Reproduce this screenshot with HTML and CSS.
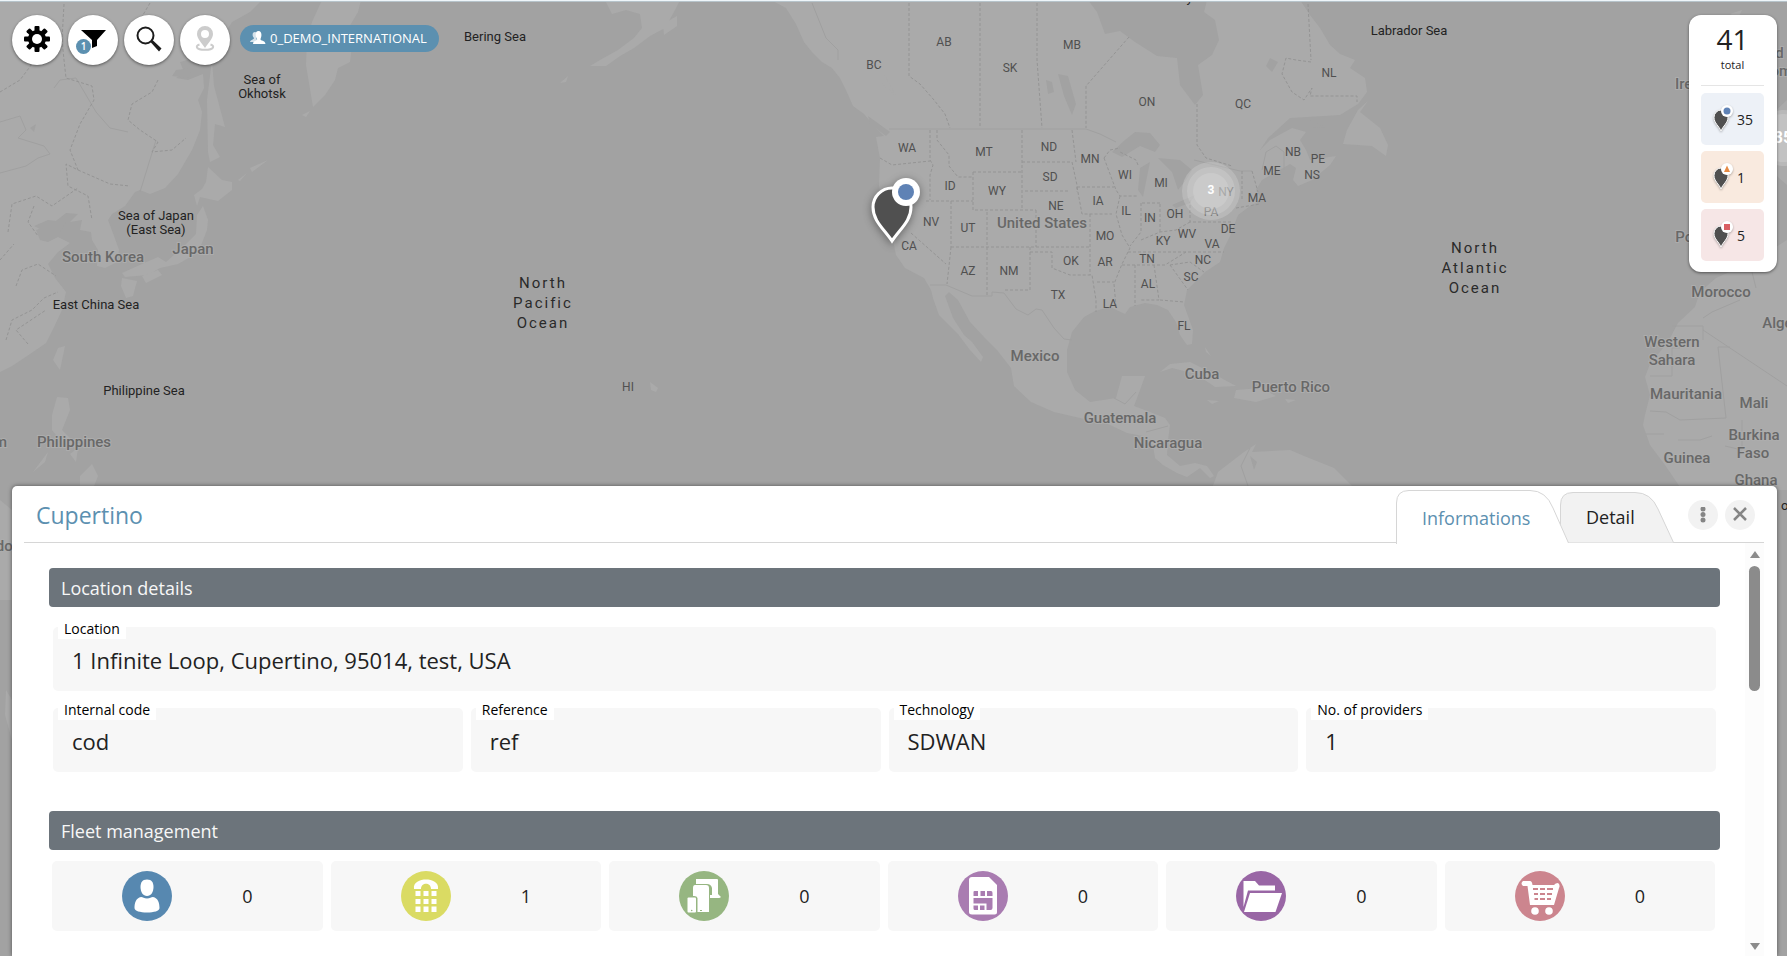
FILE: index.html
```html
<!DOCTYPE html>
<html lang="en">
<head>
<meta charset="utf-8">
<meta name="viewport" content="width=device-width, initial-scale=1">
<title>Cupertino</title>
<link rel="stylesheet" href="styles.css">
</head>
<body>
<svg class="map" viewBox="0 0 1787 956" preserveAspectRatio="xMidYMin slice" role="img" aria-label="World map">
  <rect width="1787" height="956" class="water"/>
  <g class="land">
    <path d="M0 0H262L250 12L232 22L222 38L205 46L195 58L180 62L184 72L176 78L188 80L203 74L204 88L198 100L202 112L200 130L192 150L178 174L165 188L150 194L140 190L135 192L125 206L112 214L108 220L114 236L119 250L117 262L105 268L97 266L98 250L92 240L91 232L80 230L82 220L70 222L78 214L66 213L52 224L36 230L40 240L48 242L58 237L70 243L58 252L48 264L55 278L66 292L62 310L55 325L46 343L30 354L12 366L0 372Z"/>
    <path d="M212 60L214 86L225 127L215 124L213 145L220 157L210 162L208 152L207 100Z"/>
    <path d="M208 167L222 180L232 182L232 190L218 201L200 197L197 206L194 195L202 189L206 182Z"/>
    <path d="M203 206L208 220L207 230L200 248L192 256L178 264L160 268L148 275L125 277L122 273L142 264L158 257L166 262L185 245L196 234L197 215Z"/>
    <path d="M122 278L137 281L133 296L126 298L121 286ZM142 276L158 270L162 275L146 283ZM65 346L60 370L53 360L58 348ZM57 397L68 398L70 410L62 430L72 440L80 444L75 448L60 440L52 430L52 415ZM48 452L45 462L33 472L42 460ZM80 476L92 464L98 476L94 486H80ZM70 454L78 448L76 462ZM250 168L268 160L252 172ZM238 180L247 173L240 181ZM302 115L310 111L306 117Z"/>
    <path d="M322 0L312 22L307 40L306 65L313 107L325 95L335 80L338 68L350 62L352 45L345 34L358 12L361 0Z"/>
    <path d="M605 0H680L675 10L665 28L650 36L634 48L620 56L606 66L590 66L600 60L618 50L634 38L642 28L640 14L626 10L612 14ZM663 24L677 16L677 26L664 35ZM560 83L568 76L566 82ZM572 78L577 75ZM650 382L658 388L656 392L651 390ZM480 98L486 96ZM503 98L506 97ZM518 95L522 92Z"/>
    <path d="M771 0L786 8L796 24L804 42L812 52L822 62L832 68L840 78L846 90L853 106L864 114L874 126L884 136L876 137L880 158L879 185L884 220L893 240L896 255L905 268L924 278L931 290L933 298L939 315L949 325L958 334L970 350L981 362L983 357L972 342L964 335L953 318L945 296L949 292L958 300L970 322L985 338L997 350L1011 368L1014 386L1031 402L1054 412L1080 418L1108 424L1127 433L1143 436L1153 445L1155 458L1163 465L1177 473L1187 477L1200 468L1210 478L1214 476L1207 466L1195 463L1180 466L1167 455L1168 440L1170 425L1165 418L1150 412L1134 406L1140 390L1145 376L1122 376L1116 398L1090 402L1075 390L1067 372L1067 350L1072 332L1084 317L1095 311L1110 307L1125 314L1130 307L1145 303L1157 305L1168 310L1176 322L1180 335L1187 345L1192 344L1193 330L1184 305L1187 290L1205 272L1220 262L1224 248L1230 236L1238 215L1250 206L1262 200L1256 190L1262 180L1276 172L1290 164L1296 168L1293 180L1298 186L1312 180L1330 165L1336 156L1310 160L1306 150L1300 140L1306 132L1292 128L1270 140L1260 150L1268 138L1290 118L1340 115L1358 104L1367 92L1365 78L1350 68L1355 60L1340 54L1330 45L1320 28L1310 15L1300 0Z"/>
    <path d="M1368 101L1360 112L1380 128L1388 145L1386 156L1372 146L1343 144L1347 130L1358 110ZM876 70L884 74L896 96L880 82Z"/>
    <path d="M1160 372L1170 364L1190 362L1210 372L1236 386L1215 387L1196 374L1172 368ZM1236 390L1260 388L1276 396L1256 402L1234 398ZM1207 400L1219 401L1212 404ZM1285 399L1296 400L1288 403ZM1205 347L1211 356L1206 352Z"/>
    <path d="M1213 486L1218 472L1244 452L1256 444L1252 452L1290 450L1304 456L1334 468L1352 486Z"/>
    <path d="M1787 240L1752 262L1716 278L1700 292L1695 307L1678 323L1668 342L1650 364L1645 377L1650 395L1645 415L1643 425L1650 445L1665 465L1682 490H1787ZM1787 100L1770 116L1760 140L1770 170L1787 185ZM1730 14L1742 10L1738 18Z"/>
    <path d="M0 500L12 510V600H0ZM6 690L12 700V740L5 715Z"/>
  </g>
  <g class="water">
    <path d="M1088 0L1097 12L1105 34L1120 31L1135 42L1157 56L1177 58L1180 85L1195 105L1203 95L1198 65L1212 55L1219 40L1215 20L1204 12L1207 0Z"/>
    <path d="M1112 152L1125 140L1135 132L1150 133L1160 145L1155 152L1140 146L1122 157ZM1140 168L1150 162L1148 172L1143 197L1138 190ZM1158 158L1180 160L1192 170L1186 180L1178 190L1172 172ZM1172 205L1195 195L1190 203L1176 208ZM1058 74L1068 76L1076 104L1072 115L1064 96ZM1046 80L1052 82L1054 92L1048 94ZM1270 58L1278 62L1272 72L1266 66ZM1308 120L1325 127L1312 128Z"/>
    <path d="M868 116L890 132L886 136L870 124ZM66 222L60 232L46 232L34 226L48 220ZM30 128L36 124L34 132ZM176 70L192 68L188 78L172 76ZM1250 456L1257 462L1254 470Z"/>
  </g>
  <g class="line">
    <path d="M889 129H1086L1100 134L1116 142M930 285L946 285L972 296L992 296V292L1004 293L1016 309L1028 315L1036 309L1042 310L1054 328L1064 339L1072 340M1194 160L1240 171L1252 171M1262 170L1266 152L1276 146L1284 152V170M812 3L826 38L838 50V60M0 122L20 116L26 130L18 138L44 146L50 154L38 158L26 166L0 173M54 88L60 80L76 78L96 112L110 128L128 132M140 192L156 140M1114 398L1125 404L1136 392M1146 432L1168 426M1250 448L1241 466L1248 486"/>
    <path d="M1672 326H1703V340M1703 330L1787 386M1703 318L1712 312L1740 300M1650 376H1672V348H1680M1718 347H1730M1718 347L1726 418L1680 420M1680 420L1666 412L1650 411M1646 434H1664M1678 440H1700L1712 436M1742 420V450L1725 446M1752 272L1756 288"/>
  </g>
  <g class="border">
    <path d="M909 3V76L920 84L934 100L945 114L950 128M980 3V128M1037 3V60L1042 128M1129 37L1086 86V128M1197 104V145L1206 158L1232 166M1308 4L1311 60M1311 62L1296 60L1286 58L1282 74L1292 92L1304 100L1312 88L1310 96H1357V102"/>
    <path d="M930 130V160L933 165L930 175V200M937 130V140L949 155V166L958 177H972M880 158L892 165L930 161M926 201H973M1022 130V210M973 172H1022M973 172V210H1036M1022 162H1072L1077 185V192M1072 130L1076 162M1025 191H1068M951 201V247M951 247H1090M951 247L949 266L947 284M987 212V296M911 233L946 264M1036 210V247M1030 247V290H1004M1030 252H1052V268L1070 275H1092L1096 300V312M1077 187H1114M1077 187L1082 214H1112M1090 214V247L1090 275M1104 158L1110 150L1120 148M1138 165L1136 160L1120 152M1104 158L1116 190L1120 196H1138M1120 196L1116 214L1122 235L1130 248L1122 264L1114 284L1116 306M1141 203V232L1130 246M1160 204V232M1142 203H1160M1190 200V222H1232M1141 240L1160 232L1176 230L1190 222M1128 252H1224M1122 265H1165L1186 252M1135 265V306M1154 265L1159 300H1140M1097 282H1114M1160 300L1184 302M1170 265L1188 290M1170 265L1190 262L1204 272M1242 171V200M1252 171L1258 192M1236 208L1260 204"/>
    <path d="M64 4L62 40L64 60L66 78L92 86L94 100L80 124L70 150L78 170L66 164L68 186L88 196L92 220M150 3L140 20L144 30M158 80L152 92L132 104L128 120L140 130L158 142L152 152L172 150L186 138M0 92L20 80L32 64M8 232L12 204L36 196L52 206L78 188M0 260L14 244M16 286L22 270L38 264L56 276M6 340L12 320L32 310L44 298L58 292M28 344L16 330L46 310M78 170L110 184L130 186M34 206L28 222L38 236"/>
  </g>
  <g class="labels state">
    <text x="874" y="69">BC</text><text x="944" y="46">AB</text><text x="1010" y="72">SK</text><text x="1072" y="49">MB</text><text x="1147" y="106">ON</text><text x="1243" y="108">QC</text><text x="1329" y="77">NL</text><text x="907" y="152">WA</text><text x="984" y="156">MT</text><text x="1049" y="151">ND</text><text x="1090" y="163">MN</text><text x="1125" y="179">WI</text><text x="1161" y="187">MI</text><text x="1272" y="175">ME</text><text x="1293" y="156">NB</text><text x="1318" y="163">PE</text><text x="1312" y="179">NS</text><text x="950" y="190">ID</text><text x="997" y="195">WY</text><text x="1050" y="181">SD</text><text x="1056" y="210">NE</text><text x="1098" y="205">IA</text><text x="1126" y="215">IL</text><text x="1150" y="222">IN</text><text x="1175" y="218">OH</text><text x="1211" y="216">PA</text><text x="1226" y="196">NY</text><text x="1257" y="202">MA</text><text x="1228" y="233">DE</text><text x="931" y="226">NV</text><text x="968" y="232">UT</text><text x="909" y="250">CA</text><text x="1105" y="240">MO</text><text x="1163" y="245">KY</text><text x="1187" y="238">WV</text><text x="1212" y="248">VA</text><text x="968" y="275">AZ</text><text x="1009" y="275">NM</text><text x="1071" y="265">OK</text><text x="1105" y="266">AR</text><text x="1147" y="263">TN</text><text x="1203" y="264">NC</text><text x="1191" y="281">SC</text><text x="1058" y="299">TX</text><text x="1110" y="308">LA</text><text x="1148" y="288">AL</text><text x="1184" y="330">FL</text><text x="628" y="391">HI</text>
  </g>
  <g class="labels country">
    <text x="1042" y="228">United States</text><text x="1035" y="361">Mexico</text><text x="1202" y="379">Cuba</text><text x="1291" y="392">Puerto Rico</text><text x="1120" y="423">Guatemala</text><text x="1168" y="448">Nicaragua</text><text x="193" y="254">Japan</text><text x="103" y="262">South Korea</text><text x="74" y="447">Philippines</text><text x="-21" y="447">Vietnam</text><text x="16" y="551">Indonesia</text>
    <text x="1762" y="58">United</text><text x="1762" y="76">Kingdom</text><text x="1698" y="89">Ireland</text><text x="1704" y="242">Portugal</text><text x="1721" y="297">Morocco</text><text x="1786" y="328">Algeria</text><text x="1672" y="347">Western</text><text x="1672" y="365">Sahara</text><text x="1686" y="399">Mauritania</text><text x="1754" y="408">Mali</text><text x="1754" y="440">Burkina</text><text x="1753" y="458">Faso</text><text x="1687" y="463">Guinea</text><text x="1756" y="485">Ghana</text>
  </g>
  <g class="labels sea">
    <text x="495" y="41">Bering Sea</text><text x="262" y="84">Sea of</text><text x="262" y="98">Okhotsk</text><text x="156" y="220">Sea of Japan</text><text x="156" y="234">(East Sea)</text><text x="96" y="309">East China Sea</text><text x="144" y="395">Philippine Sea</text><text x="1409" y="35">Labrador Sea</text><text x="1158" y="2">Hudson Bay</text><text x="1787" y="510">of</text>
  </g>
  <g class="labels ocean">
    <text x="543" y="288">North</text><text x="543" y="308">Pacific</text><text x="543" y="328">Ocean</text><text x="1475" y="253">North</text><text x="1475" y="273">Atlantic</text><text x="1475" y="293">Ocean</text>
  </g>
  <g class="cluster">
    <circle cx="1211" cy="191" r="29"/><circle cx="1211" cy="191" r="24"/><circle cx="1211" cy="191" r="18"/>
    <text x="1211" y="194">3</text>
    <circle cx="1783" cy="138" r="28"/><circle cx="1783" cy="138" r="24"/>
    <text class="large" x="1783" y="143">35</text>
  </g>
  <g class="marker">
    <path d="M892 241C884 229 873 221 873 207A19 19 0 0 1 911 207C911 221 900 229 892 241Z"/>
    <circle class="halo" cx="906" cy="192" r="14"/><circle class="dot" cx="906" cy="192" r="8"/>
  </g>
</svg>

<div class="screen">
  <header class="top">
    <nav class="toolbar" aria-label="Map tools">
      <button class="tool" aria-label="Settings">
        <svg viewBox="0 0 26 26" width="26" height="26"><g><rect x="10.500" y="0" width="5" height="26" rx="1"/><rect x="10.500" y="0" width="5" height="26" rx="1" transform="rotate(45 13 13)"/><rect x="10.500" y="0" width="5" height="26" rx="1" transform="rotate(90 13 13)"/><rect x="10.500" y="0" width="5" height="26" rx="1" transform="rotate(135 13 13)"/><circle cx="13" cy="13" r="9"/></g><circle cx="13" cy="13" r="5" fill="#fff"/></svg>
      </button>
      <button class="tool" aria-label="Filter, 1 active">
        <svg viewBox="0 0 26 26" width="26" height="26"><path d="M1 4H26L17 14V20L12 22V14Z"/></svg>
        <span class="count">1</span>
      </button>
      <button class="tool" aria-label="Search">
        <svg viewBox="0 0 26 26" width="26" height="26"><circle cx="9.500" cy="9.500" r="8" fill="none" stroke="#1c1c1c" stroke-width="2"/><path d="M14.500 16L16.500 14L25.500 22.500L23 25.500Z" fill="#1c1c1c"/></svg>
      </button>
      <button class="tool" aria-label="Locate" disabled>
        <svg viewBox="0 0 26 26" width="26" height="26" fill="#ccc"><path fill-rule="evenodd" d="M13 0A8 8 0 0 1 21 8C21 13 16 17 13 22C10 17 5 13 5 8A8 8 0 0 1 13 0ZM13 4A4 4 0 1 0 13 12A4 4 0 0 0 13 4Z"/><path d="M7.500 18.500C5 19.300 4.500 20.500 5 21.500C6.500 24.600 19.500 24.600 21 21.500C21.500 20.500 21 19.300 18.500 18.500" fill="none" stroke="#ccc" stroke-width="2"/></svg>
      </button>
      <button class="chip">
        <svg viewBox="0 0 16 14" width="16" height="14" fill="#fff"><path opacity=".75" d="M0 11C1 8 4 9 4 7C2 5 2 1 5 1C7 1 8 4 6 7L8 11Z"/><path d="M3 13C3 9 8 10 7 8C5 5 5 0 8.500 0C12 0 12 5 10.500 8C10 10 15 9 15.500 13Z"/></svg>
        <span>0_DEMO_INTERNATIONAL</span>
      </button>
    </nav>
    <aside class="totals" aria-label="Totals">
      <div class="sum"><strong>41</strong><span>total</span></div>
      <button class="tile ok"><svg viewBox="0 0 22 28" width="22" height="28"><path class="pin" d="M10 26C8 21 3 18 3 12.500A7 7.500 0 0 1 17 12.500C17 18 12 21 10 26Z"/><circle cx="16" cy="6" r="6" fill="#fff"/><circle cx="16" cy="6" r="3.500" fill="#5f82b5"/></svg><span>35</span></button>
      <button class="tile warn"><svg viewBox="0 0 22 28" width="22" height="28"><path class="pin" d="M10 26C8 21 3 18 3 12.500A7 7.500 0 0 1 17 12.500C17 18 12 21 10 26Z"/><circle cx="16" cy="6" r="6" fill="#fff"/><path d="M16 2.500L19 9H13Z" fill="#e58a45"/></svg><span>1</span></button>
      <button class="tile bad"><svg viewBox="0 0 22 28" width="22" height="28"><path class="pin" d="M10 26C8 21 3 18 3 12.500A7 7.500 0 0 1 17 12.500C17 18 12 21 10 26Z"/><circle cx="16" cy="6" r="6" fill="#fff"/><rect x="13" y="3" width="6" height="6" fill="#d95f63"/></svg><span>5</span></button>
    </aside>
  </header>

  <main class="panel">
    <div class="head">
      <h1>Cupertino</h1>
      <div class="tabs" role="tablist">
        <button class="tab active" role="tab" aria-selected="true"><svg class="shape" viewBox="0 0 173 54" width="173" height="54"><path d="M.5 54V13Q.5 .5 13 .5H134Q150 .5 157 18L172.500 53" fill="#fff" stroke="#d6d6d6"/></svg><span>Informations</span></button>
        <button class="tab" role="tab" aria-selected="false"><svg class="shape" viewBox="0 0 114 51" width="114" height="51"><path d="M.5 50.500V13Q.5 .5 13 .5H75Q91 .5 98 17L113.500 50.500" fill="#f2f2f2" stroke="#d6d6d6"/></svg><span>Detail</span></button>
      </div>
      <div class="actions">
        <button class="round" aria-label="More"><svg viewBox="0 0 16 16" width="16" height="16" fill="#858585"><circle cx="8" cy="2" r="2.500"/><circle cx="8" cy="7.500" r="2.500"/><circle cx="8" cy="13" r="2.500"/></svg></button>
        <button class="round" aria-label="Close"><svg viewBox="0 0 16 16" width="16" height="16" fill="none" stroke="#858585" stroke-width="2.500"><path d="M2 1L14 13M14 1L2 13"/></svg></button>
      </div>
    </div>
    <div class="body">
      <div class="content">
        <section>
          <h2>Location details</h2>
          <dl class="fields">
            <div class="field wide"><dt>Location</dt><dd>1 Infinite Loop, Cupertino, 95014, test, USA</dd></div>
            <div class="field"><dt>Internal code</dt><dd>cod</dd></div>
            <div class="field"><dt>Reference</dt><dd>ref</dd></div>
            <div class="field"><dt>Technology</dt><dd>SDWAN</dd></div>
            <div class="field"><dt>No. of providers</dt><dd>1</dd></div>
          </dl>
        </section>
        <section>
          <h2>Fleet management</h2>
          <ul class="fleet">
            <li><svg viewBox="0 0 50 50" width="50" height="50" fill="#fff"><circle cx="25" cy="25" r="25" fill="#5788b0"/><path d="M25 8.500C30 8.500 31.500 12 31.500 16C31.500 21 29 25 25 25S18.500 21 18.500 16C18.500 12 20 8.500 25 8.500Z"/><path d="M19 26C21 26 22 27.500 25 27.500S29 26 31 26C36 27 37.500 32 37.500 37C37.500 40 32 41.500 25 41.500S12.500 40 12.500 37C12.500 32 14 27 19 26Z"/></svg><span>0</span></li>
            <li><svg viewBox="0 0 50 50" width="50" height="50" fill="#fff"><circle cx="25" cy="25" r="25" fill="#dadb63"/><path d="M13 18C12 11 19 8.500 25 8.500S38 11 37 18H30C30 11 20 11 20 18Z"/><path d="M14.500 20h5v5h-5zM22.500 20h5v5h-5zM30.500 20h5v5h-5zM14.500 28h5v5h-5zM22.500 28h5v5h-5zM30.500 28h5v5h-5zM14.500 35.500h5v5.500h-5zM22.500 35.500h5v5.500h-5zM30.500 35.500h5v5.500h-5z"/></svg><span>1</span></li>
            <li><svg viewBox="0 0 50 50" width="50" height="50" fill="#fff"><circle cx="25" cy="25" r="25" fill="#96b681"/><path d="M17 8H38Q39 8 39 9V23L42 26Q41 27 40 27H31V24H33V17Q32 13 28 13H17Z"/><path d="M16 14H27Q30 14 30 17V41H18.500V27Q18 25 15 25H14V17Q14 14 16 14Z"/><rect x="8.500" y="26.500" width="8.500" height="15" rx="1"/><circle cx="12.700" cy="39.500" r=".8" fill="#96b681"/><path d="M21 39h2v1h-2z" fill="#96b681"/></svg><span>0</span></li>
            <li><svg viewBox="0 0 50 50" width="50" height="50"><circle cx="25" cy="25" r="25" fill="#a97cb1"/><path d="M14 6H31L39 14V41Q39 43.500 36.500 43.500H14Q11 43.500 11 41V9Q11 6 14 6Z" fill="#fff"/><path d="M16.500 20H20V25H15.500V21Q15.500 20 16.500 20ZM22.500 20H27V25H22.500ZM29 20H33Q34.500 20 34.500 22V25H29ZM15.500 27H34.500V37Q34.500 39 32.500 39H28.500V32.500H15.500ZM15.500 34.500H20V39H17Q15.500 39 15.500 37.500ZM22 34.500H26.500V39H22Z" fill="#a97cb1"/></svg><span>0</span></li>
            <li><svg viewBox="0 0 50 50" width="50" height="50" fill="#fff"><circle cx="25" cy="25" r="25" fill="#9966a5"/><path d="M7.500 10H19L23 14.500H39V19.500H12L7.500 36Z"/><path d="M14 22H46L39.500 41H8Z"/></svg><span>0</span></li>
            <li><svg viewBox="0 0 50 50" width="50" height="50" fill="#fff"><circle cx="25" cy="25" r="25" fill="#cc858e"/><path d="M8 10H15Q17 10 17.500 14H39Q40.500 12 43 12Q45.500 14 44 17L39 34H15L12.500 15H8Q5 12.500 8 10Z"/><path d="M18 18h5M25 18h5M32 18h6M19 23h4M25 23h5M32 23h5M19.500 28h3.500M25 28h5M32 28h4" stroke="#cc858e" stroke-width="2" fill="none"/><circle cx="20" cy="40" r="3.800"/><circle cx="34" cy="40" r="3.800"/></svg><span>0</span></li>
          </ul>
        </section>
      </div>
      <div class="scroll" aria-hidden="true"><i class="up"></i><i class="thumb"></i><i class="down"></i></div>
    </div>
  </main>
</div>
</body>
</html>
```
FILE: styles.css
```css
* { box-sizing: border-box; margin: 0; padding: 0; }

body {
  height: 100vh;
  overflow: hidden;
  background: #a2a2a2;
  color: #222;
  font-family: "Open Sans", sans-serif;
}

button { border: 0; background: none; color: inherit; font: inherit; cursor: pointer; }
svg { display: block; flex: none; }

/* Map */
.map { position: absolute; top: 0; left: 0; width: 100%; height: 100%; }
.water { fill: #a2a2a2; }
.land { fill: #aaa; }
.line { fill: none; stroke: #a0a0a0; stroke-width: 1; }
.border { fill: none; stroke: #949494; stroke-width: 1; stroke-dasharray: 3 2; }
.labels { font-family: Roboto, sans-serif; text-anchor: middle; }
.state { font-size: 12px; fill: #505050; }
.country { font-size: 15px; font-weight: 500; fill: #686868; stroke: #adadad; stroke-width: 2; paint-order: stroke; }
.sea { font-size: 13px; fill: #222; }
.ocean { font-size: 15px; letter-spacing: 2px; fill: #2a2a2a; }
.cluster { fill: #fff; text-anchor: middle; font-family: Roboto, sans-serif; font-size: 12px; font-weight: 700; }
.cluster circle { fill: #ddd; opacity: .28; }
.cluster .large { font-size: 16px; }
.marker { filter: drop-shadow(0 2px 4px rgba(0, 0, 0, .4)); }
.marker path { fill: #505050; stroke: #fff; stroke-width: 3; }
.marker .halo { fill: #fff; }
.marker .dot { fill: #5f82b5; }

/* Page frame */
.screen {
  position: relative;
  display: flex;
  flex-direction: column;
  justify-content: space-between;
  height: 100%;
  border-top: 1px solid #eef5f9;
  box-shadow: inset 0 1px #b6c3ca;
}

.top {
  display: flex;
  justify-content: space-between;
  align-items: flex-start;
  padding: 14px 10px 0 12px;
}

.toolbar { display: flex; gap: 6px; }

.tool {
  position: relative;
  display: flex;
  align-items: center;
  justify-content: center;
  width: 50px;
  height: 50px;
  padding-bottom: 2px;
  border-radius: 50%;
  background: #fff;
  box-shadow: 0 1px 3px rgba(0, 0, 0, .5);
}

.count {
  position: absolute;
  left: 8px;
  bottom: 11px;
  width: 15px;
  height: 15px;
  border-radius: 50%;
  background: #5c90b0;
  box-shadow: 0 0 0 1px #fff;
  color: #fff;
  font-size: 10px;
  font-weight: 600;
  line-height: 15px;
  text-align: center;
}

.chip {
  display: flex;
  align-items: center;
  gap: 4px;
  height: 27px;
  margin: 10px 0 0 4px;
  padding: 0 12px 1px 10px;
  border-radius: 14px;
  background: #5c90b0;
  color: #fff;
  font-size: 13px;
}

.totals {
  display: flex;
  flex-direction: column;
  gap: 6px;
  width: 88px;
  padding: 10px 13px 11px 12px;
  border-radius: 12px;
  background: #fff;
  box-shadow: 0 1px 3px rgba(0, 0, 0, .5);
}

.sum {
  display: flex;
  flex-direction: column;
  align-items: center;
  gap: 4px;
  margin-bottom: 1px;
  padding-bottom: 12px;
  border-bottom: 1px solid #e5e5e5;
}

.sum strong { font-size: 28px; font-weight: 400; line-height: 28px; }
.sum span { font-size: 11px; line-height: 16px; }

.tile {
  display: flex;
  align-items: center;
  gap: 4px;
  height: 52px;
  padding-left: 10px;
  border-radius: 5px;
  font-size: 14px;
}

.tile svg { filter: drop-shadow(0 1px 1px rgba(0, 0, 0, .3)); }
.pin { fill: #505050; stroke: #fff; stroke-width: 1; }
.ok { background: #edf1f7; }
.warn { background: #f9eadf; }
.bad { background: #f6e6e6; }

/* Detail panel */
.panel {
  display: flex;
  flex-direction: column;
  margin: 0 10px 0 12px;
  padding: 0 13px 0 12px;
  border-radius: 5px 5px 0 0;
  background: #fff;
  box-shadow: 0 0 4px rgba(0, 0, 0, .5);
}

.head {
  display: flex;
  align-items: flex-start;
  height: 57px;
  border-bottom: 1px solid #d6d6d6;
}

h1 {
  flex: 1;
  padding: 12px;
  color: #5c90b0;
  font-size: 23px;
  font-weight: 400;
  line-height: 34px;
}

.tabs { display: flex; align-self: flex-end; align-items: flex-end; height: 53px; }

.tab {
  position: relative;
  width: 113px;
  height: 50px;
  padding-left: 26px;
  font-size: 18px;
  text-align: left;
}

.tab.active { z-index: 1; width: 164px; height: 52px; padding-top: 3px; padding-left: 26px; color: #5c90b0; }
.shape { position: absolute; top: 0; left: 0; }
.tab span { position: relative; }

.actions { display: flex; gap: 7px; padding: 14px 9px 0 15px; }

.round {
  display: flex;
  align-items: center;
  justify-content: center;
  width: 30px;
  height: 30px;
  border-radius: 50%;
  background: #f2f2f2;
}

.body { display: flex; }
.content { flex: 1; padding: 25px; }

h2 {
  height: 39px;
  padding-left: 12px;
  border-radius: 4px;
  background: #6c747b;
  color: #f7f7f7;
  font-size: 18px;
  font-weight: 400;
  line-height: 40px;
}

.fields {
  display: grid;
  grid-template-columns: repeat(4, 1fr);
  gap: 17px 8px;
  padding: 20px 4px 39px;
}

.field {
  position: relative;
  height: 64px;
  padding: 16px 19px 0;
  border-radius: 5px;
  background: #f7f7f7;
}

.wide { grid-column: 1 / -1; }

dt {
  position: absolute;
  top: -8px;
  left: 5px;
  padding: 0 6px;
  background: #fff;
  color: #000;
  font-size: 14px;
  line-height: 20px;
}

dd { font-size: 22px; line-height: 34px; }

.fleet {
  display: grid;
  grid-template-columns: repeat(6, 1fr);
  gap: 8px;
  padding: 11px 5px 0 3px;
  list-style: none;
}

.fleet li {
  display: flex;
  align-items: center;
  justify-content: space-evenly;
  height: 70px;
  border-radius: 5px;
  background: #f7f7f7;
  font-size: 18px;
}

.scroll {
  display: flex;
  flex-direction: column;
  align-items: center;
  width: 19px;
  padding: 8px 0 6px;
  background: #fcfcfc;
}

.up, .down { border: 5px solid transparent; }
.up { border-top: 0; border-bottom: 7px solid #8b8b8b; }
.down { margin-top: auto; border-bottom: 0; border-top: 7px solid #8b8b8b; }
.thumb { width: 11px; height: 125px; margin-top: 8px; border-radius: 6px; background: #8b8b8b; }
```
